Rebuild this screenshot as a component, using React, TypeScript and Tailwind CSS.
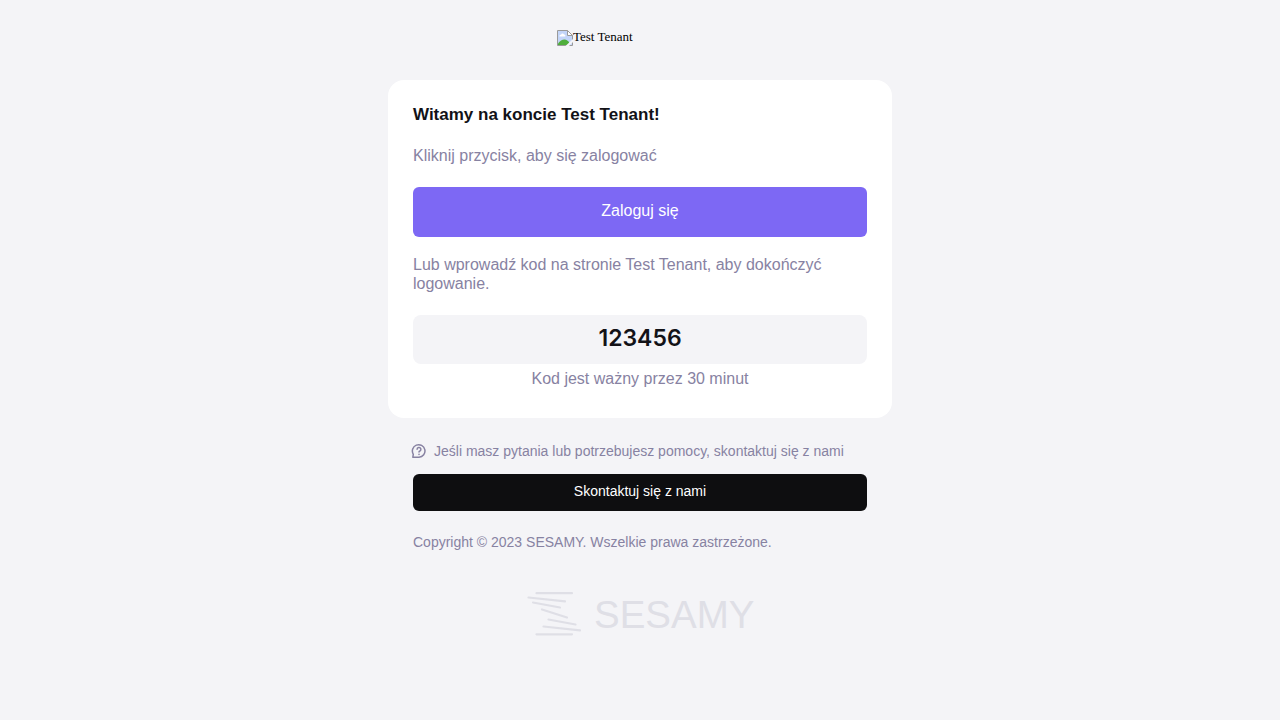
function BrokenImageIcon() {
  return (
    <svg aria-hidden="true" width="16" height="16" viewBox="0 0 16 16" className="shrink-0">
      <path d="M.5.5h10l5 5v10H.5z" fill="#c3d5f9" stroke="#9a9a9a" />
      <path d="M2.500 6.500c-.3-1.300.7-2 1.600-1.800.3-1.500 2.400-1.600 2.900-.2 1.200-.2 1.700 1.100 1.200 2z" fill="#fff" />
      <path d="M1 15v-1.500C3 11 5 9.500 7.500 9.500c2 0 3 1 4.500 2.500v3z" fill="#4fae3c" />
      <path d="M10.500.5v5h5z" fill="#fff" stroke="#9a9a9a" />
      <path d="M16 9v3L12 16H8.500z" fill="#f4f4f7" />
    </svg>
  );
}

function HelpIcon() {
  return (
    <svg
      aria-hidden="true"
      width="16"
      height="16"
      viewBox="0 0 16 16"
      fill="none"
      stroke="#8782a2"
      strokeWidth="1.5"
      strokeLinecap="round"
      strokeLinejoin="round"
      className="shrink-0"
    >
      <path d="M8 14.300H1.800L2.300 11.300A6.300 6.300 0 1 1 8 14.300z" />
      <path d="M6.100 6.300a1.900 1.900 0 1 1 2.800 1.700c-.6.300-.9.600-.9 1" />
      <path d="M8 11.300v.1" />
    </svg>
  );
}

function SesamyLogo() {
  return (
    <svg role="img" aria-label="SESAMY" width="226" height="46" viewBox="0 0 226 46" overflow="visible">
      <g stroke="#dfdfe6" strokeWidth="2.200" strokeLinecap="round">
        <path d="M9.500 2.200h35.500" />
        <path d="M1.500 6.500l36.500 3.800" />
        <path d="M6 11.500l27 5" />
        <path d="M15 18.500l25 8" />
        <path d="M21.500 28.500l27 5" />
        <path d="M16.500 35.500l36.500 3.800" />
        <path d="M9.500 43.300h35.500" />
      </g>
      <text x="67" y="37" fill="#dfdfe6" fontSize="38.500" fontFamily="'Liberation Sans', Arial, sans-serif">
        SESAMY
      </text>
    </svg>
  );
}

export default function App() {
  return (
    <div className="min-h-screen bg-[#f4f4f7] font-['Liberation_Sans',Arial,sans-serif] text-[#8782a2]">
      <div className="mx-auto flex w-full max-w-[504px] flex-col">
        <header className="flex h-20 justify-center pt-[30px]">
          <div className="flex w-[166px] items-start font-['Liberation_Serif',serif] text-[13px] leading-[14px] text-black">
            <BrokenImageIcon />
            <span>Test Tenant</span>
          </div>
        </header>
        <main className="rounded-2xl bg-white px-[25px] pt-[23px] pb-[29px] text-base">
          <h1 className="text-[17px] leading-6 font-bold text-[#121217]">Witamy na koncie Test Tenant!</h1>
          <p className="mt-[19px] leading-5">Kliknij przycisk, aby się zalogować</p>
          <button type="button" className="mt-[21px] h-[50px] w-full rounded-md bg-[#7d68f4] pb-[2px] text-white">
            Zaloguj się
          </button>
          <p className="mt-[18px] leading-[19px]">
            Lub wprowadź kod na stronie Test Tenant, aby dokończyć logowanie.
          </p>
          <p className="mt-[22px] h-[49px] rounded-lg bg-[#f4f4f7] text-center font-['Inter',sans-serif] text-[23px] leading-[46px] font-semibold text-[#121217]">
            123456
          </p>
          <p className="mt-[5px] text-center leading-5">Kod jest ważny przez 30 minut</p>
        </main>
        <footer className="px-[25px] pt-6 text-sm leading-[18px]">
          <p className="-ml-0.5 flex items-center gap-[7px]">
            <HelpIcon />
            <span>Jeśli masz pytania lub potrzebujesz pomocy, skontaktuj się z nami</span>
          </p>
          <button type="button" className="mt-[14px] h-[37px] w-full rounded-md bg-[#0e0e10] pb-1 text-white">
            Skontaktuj się z nami
          </button>
          <p className="mt-[22px]">Copyright © 2023 SESAMY. Wszelkie prawa zastrzeżone.</p>
          <div className="mt-10 flex justify-center">
            <SesamyLogo />
          </div>
        </footer>
      </div>
    </div>
  );
}
